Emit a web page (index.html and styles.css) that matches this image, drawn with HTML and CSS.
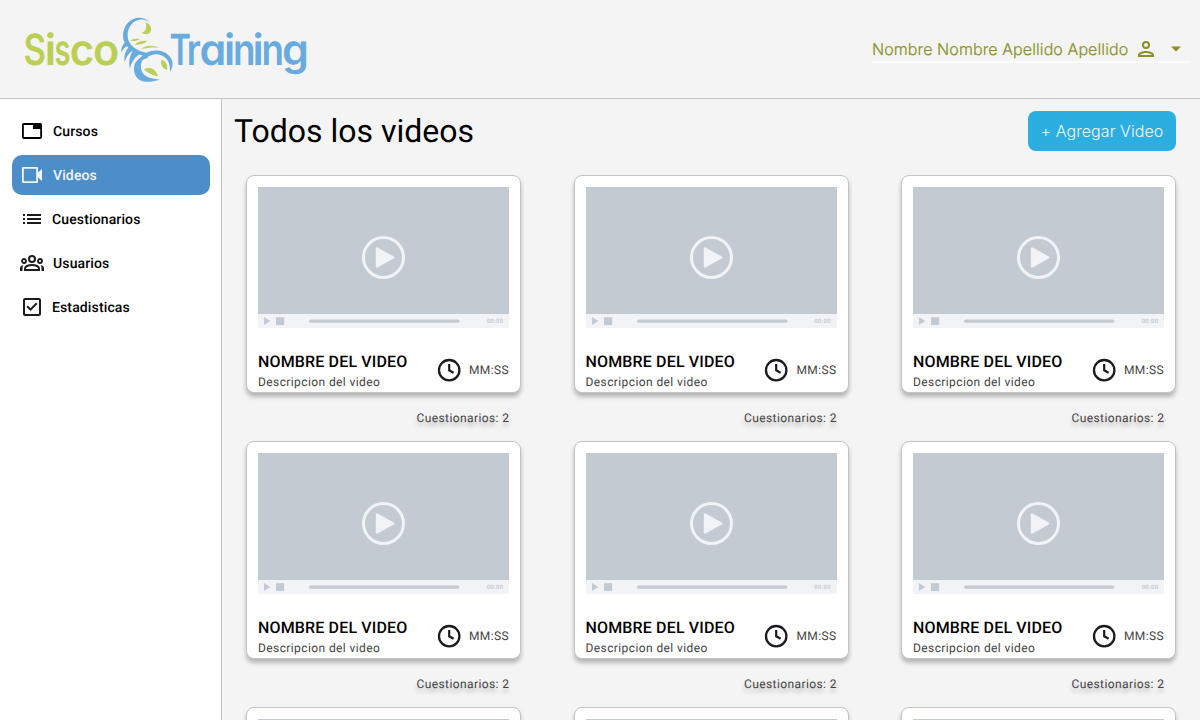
FILE: index.html
```html
<!DOCTYPE html>
<html lang="es">
<head>
<meta charset="utf-8">
<title>Sisco Training</title>
<link rel="stylesheet" href="styles.css">
</head>
<body>
<svg class="defs" width="0" height="0">
  <symbol id="player" viewBox="0 0 251 141">
    <rect width="251" height="127" fill="#c3cad2"/>
    <rect y="127" width="251" height="14" fill="#f1f3f6"/>
    <circle cx="125.5" cy="70.5" r="20" fill="none" stroke="#f1f3f6" stroke-width="3"/>
    <path d="M119 61.5v18l16.2-9z" fill="#f1f3f6" stroke="#f1f3f6" stroke-width="2.4" stroke-linejoin="round"/>
    <path d="M6 130v8l6.3-4z" fill="#c3cad2"/>
    <rect x="18" y="130.2" width="8.2" height="7.8" fill="#c3cad2"/>
    <rect x="51" y="132.4" width="150.5" height="3.4" rx="1.7" fill="#c3cad2"/>
  </symbol>
  <symbol id="clock" viewBox="0 0 24 24">
    <circle cx="12.2" cy="12.2" r="10.2" fill="none" stroke="#1d1b20" stroke-width="2.3"/>
    <path d="M12.200 6v6.300l4.400 2.500" fill="none" stroke="#1d1b20" stroke-width="2.2"/>
  </symbol>
</svg>
<header class="topbar">
  <svg class="logo" width="290" height="72" viewBox="20 14 290 72">
    <g class="wordmark">
      <text class="green" y="64.5"><tspan x="23.500" textLength="22.5" lengthAdjust="spacingAndGlyphs">S</tspan><tspan x="44.800">i</tspan><tspan x="54.500" textLength="16" lengthAdjust="spacingAndGlyphs">s</tspan><tspan x="69.700" textLength="24.5" lengthAdjust="spacingAndGlyphs">c</tspan><tspan x="93">o</tspan></text>
      <text class="blue" y="64.5"><tspan x="169.500" textLength="21.5" lengthAdjust="spacingAndGlyphs">T</tspan><tspan x="186.700" textLength="14" lengthAdjust="spacingAndGlyphs">r</tspan><tspan x="199.500">a</tspan><tspan x="224">i</tspan><tspan x="233" textLength="22.5" lengthAdjust="spacingAndGlyphs">n</tspan><tspan x="252.500">i</tspan><tspan x="261.500" textLength="22.5" lengthAdjust="spacingAndGlyphs">n</tspan><tspan x="282">g</tspan></text>
    </g>
    <g transform="scale(.33333)">
      <g fill="#69abde">
        <path d="M451 69C432 46 396 48 378 76C367 94 366 116 376 131C388 150 406 162 428 166C417 178 407 182 403 197C398 222 412 245 440 245C456 246 468 243 480 238C456 238 436 232 427 217C420 204 421 188 431 178C437 174 443 178 443 171C461 158 483 161 497 174C507 184 511 197 510 216C520 200 522 183 507 167C490 149 462 148 439 158C417 155 392 140 385 120C377 93 392 63 418 59C432 57 442 61 451 69z"/>
        <path d="M379 122C369 132 363 142 364 157C369 147 376 141 386 136zM388 140C376 151 371 167 374 187C379 170 386 160 400 151zM401 149C389 165 385 184 390 206C394 188 403 173 419 162z"/>
      </g>
      <g fill="#bbcf54">
        <path d="M437 67C453 73 458 88 449 99C443 104 432 103 425 99C439 93 441 82 437 67z"/>
        <path d="M392 123C399 117 408 115 420 118C412 122 404 124 392 123zM404 134C415 124 428 121 442 123C431 132 418 136 404 134zM424 147C437 135 458 134 478 143C458 141 441 143 424 147z"/>
        <path d="M432 208C449 199 467 205 474 229C456 226 442 219 432 208zM485 179C499 184 504 197 501 210C486 204 480 192 485 179z"/>
      </g>
    </g>
  </svg>
  <div class="user">
    <span class="user-name">Nombre Nombre Apellido Apellido</span>
    <svg class="user-icon" width="24" height="24" viewBox="0 0 24 24"><path fill="currentColor" d="M12 6a2 2 0 110 4 2 2 0 010-4m0 10c2.700 0 5.800 1.290 6 2H6c.230-.720 3.310-2 6-2m0-12a4 4 0 100 8 4 4 0 000-8zm0 10c-2.670 0-8 1.340-8 4v2h16v-2c0-2.660-5.330-4-8-4z"/></svg>
    <svg width="10" height="6" viewBox="0 0 10 6"><path fill="currentColor" d="M0 .5h10L5 5.500z"/></svg>
  </div>
</header>
<div class="layout">
  <nav class="sidebar">
    <a class="item"><svg class="icon" viewBox="0 0 24 24"><path fill="currentColor" d="M21 4H3a2 2 0 00-2 2v12c0 1.100.900 2 2 2h18c1.100 0 2-.900 2-2V6a2 2 0 00-2-2zm0 14H3V6h10v4h8v8z" transform="translate(1.100) scale(.91 1)"/></svg><span class="wide">Cursos</span></a>
    <a class="item active"><svg class="icon" viewBox="0 0 24 24"><path fill="currentColor" d="M16.200 5.800v12.400H3.800V5.800h12.400M17 4H3a1 1 0 00-1 1v14a1 1 0 001 1h14a1 1 0 001-1v-4.500l4 3.500V6l-4 3.500V5a1 1 0 00-1-1z"/></svg><span class="wide">Videos</span></a>
    <a class="item"><svg class="icon" viewBox="0 0 24 24"><path fill="#1d1b20" d="M3 7h2v2H3zM3 11h2v2H3zM3 15h2v2H3zM7 7h14v2H7zM7 11h14v2H7zM7 15h14v2H7z"/></svg><span>Cuestionarios</span></a>
    <a class="item"><svg class="icon" viewBox="0 0 24 24"><g fill="none" stroke="#1d1b20" stroke-width="2"><circle cx="12" cy="8" r="3"/><circle cx="4" cy="10" r="2" stroke-width="1.8"/><circle cx="20" cy="10" r="2" stroke-width="1.8"/><path d="M5 19v-1.600C5 15.500 8 14 12 14s7 1.500 7 3.400V19z"/></g><path fill="#1d1b20" d="M0 20v-3c0-1.500 1.200-2.600 3.400-2.800C2.700 15.200 2.500 16 2.500 17v3zM24 20v-3c0-1.500-1.200-2.600-3.400-2.800.700 1 .900 1.800.900 2.800v3z"/></svg><span class="wide">Usuarios</span></a>
    <a class="item"><svg class="icon" viewBox="0 0 24 24"><path fill="#1d1b20" d="M19 3H5a2 2 0 00-2 2v14c0 1.100.900 2 2 2h14c1.100 0 2-.900 2-2V5a2 2 0 00-2-2zm0 16H5V5h14v14zM17.500 9l-1.400-1.420-5.600 5.570-2.590-2.580L6.500 12l4 4 7-7z"/></svg><span>Estadisticas</span></a>
  </nav>
  <main class="content">
    <div class="heading">
      <h1>Todos los videos</h1>
      <button class="add">+ Agregar Video</button>
    </div>
    <section class="grid" id="videos"></section>
  </main>
</div>
<template id="video">
  <article class="video">
    <div class="card">
      <div class="media"><svg width="251" height="141"><use href="#player"/></svg><span class="time">00:00</span></div>
      <div class="info">
        <div class="text"><h2>NOMBRE DEL VIDEO</h2><p>Descripcion del video</p></div>
        <div class="duration"><svg width="24" height="24"><use href="#clock"/></svg><span>MM:SS</span></div>
      </div>
    </div>
    <div class="quizzes">Cuestionarios: 2</div>
  </article>
</template>
<script src="videos.js"></script>
</body>
</html>
```
FILE: videos.js
```js
const grid = document.getElementById('videos');
const template = document.getElementById('video');
for (let i = 0; i < 9; i++) {
  grid.append(template.content.cloneNode(true));
}
```
FILE: styles.css
```css
* { box-sizing: border-box; }
body { margin: 0; height: 720px; overflow: hidden; background: #f4f4f4; font-family: Roboto, "Liberation Sans", sans-serif; color: #000; display: flex; flex-direction: column; text-rendering: geometricPrecision; }
h1, h2, p { margin: 0; font-weight: 400; }
svg { display: block; flex: none; }
.defs { position: absolute; }
.topbar { flex: none; height: 99px; border-bottom: 1px solid #c4c4c4; padding: 14px 10px 0 20px; display: flex; justify-content: space-between; align-items: flex-start; }
.wordmark { font-family: Inter, sans-serif; font-size: 43px; font-weight: 600; font-feature-settings: "cv11"; }
.green { fill: #bbcf54; }
.blue { fill: #69abde; }
.user { width: 318px; height: 27px; margin-top: 22px; padding-top: 1px; border-bottom: 2px solid #fbfbfb; display: flex; align-items: center; color: #8a9026; }
.user-name { width: 262px; font: 300 16px/24px Inter, sans-serif; letter-spacing: .09px; white-space: nowrap; -webkit-text-stroke: .2px #8a9026; }
.user-icon { margin-right: 13px; }
.layout { flex: 1; min-height: 0; display: flex; }
.sidebar { flex: none; width: 222px; background: #fff; border-right: 1px solid #c4c4c4; padding: 12px 11px 0 12px; display: flex; flex-direction: column; gap: 4px; }
.item { height: 40px; border-radius: 10px; display: flex; align-items: center; padding-left: 8px; font-size: 14px; line-height: 20px; font-weight: 500; letter-spacing: .13px; }
.item span { margin-left: 8px; padding-top: 2px; }
.item .wide { margin-left: 9px; }
.icon { width: 24px; height: 24px; }
.active { background: #4c8ec8; color: #f4f4f4; }
.content { flex: 1; overflow: hidden; padding: 12px 24px 0 12px; }
.heading { height: 40px; display: flex; justify-content: space-between; align-items: center; }
h1 { font-size: 32px; line-height: 40px; }
.add { width: 148px; height: 40px; padding: 0; border: 0; border-radius: 8px; background: #2daee1; color: #f4f4f4; font: 300 16px/24px Inter, sans-serif; letter-spacing: .08px; white-space: nowrap; }
.grid { margin: 24px 0 0 12px; display: grid; grid-template-columns: repeat(3, 275px); justify-content: space-between; grid-auto-rows: 266px; }
.card { height: 218px; background: #fff; border: 1px solid #c4c4c4; border-radius: 8px; box-shadow: 0 4px 4px rgba(0, 0, 0, .25); padding: 11px 11px 0; }
.media { position: relative; height: 141px; }
.time { position: absolute; right: 5.5px; bottom: 2px; font-size: 6px; line-height: 8px; font-weight: 600; color: #c3cad2; letter-spacing: .3px; }
.info { display: flex; justify-content: space-between; align-items: center; margin-top: 22px; }
h2 { font-size: 16px; font-weight: 500; line-height: 24px; letter-spacing: .15px; white-space: nowrap; }
.text p { font-size: 12px; line-height: 16px; letter-spacing: .4px; color: #444; }
.duration { display: flex; align-items: center; gap: 8px; font-size: 12px; letter-spacing: .4px; color: #444; }
.quizzes { padding-right: 11.6px; margin-top: 17px; text-align: right; font-size: 12px; line-height: 16px; letter-spacing: .4px; color: #444; text-shadow: 0 4px 4px rgba(0, 0, 0, .25); }
```
